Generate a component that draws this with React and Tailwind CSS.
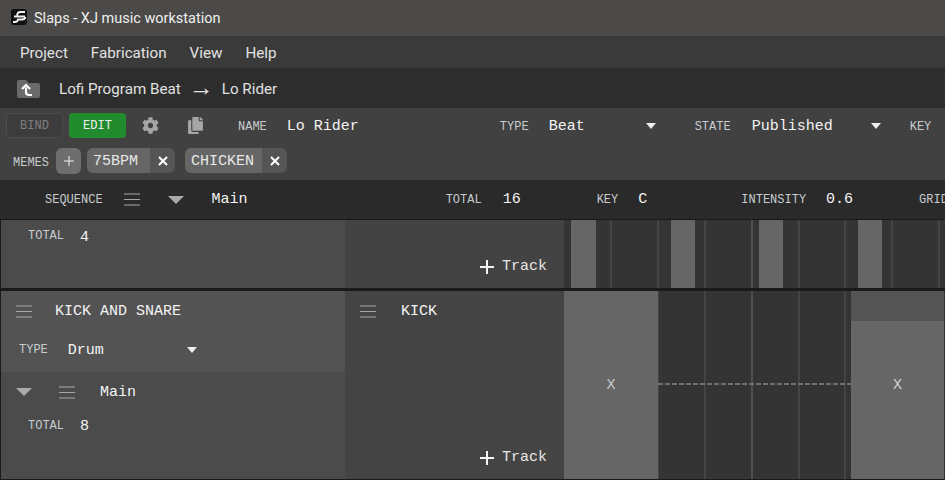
import { FaCog, FaCopy } from "react-icons/fa";

const mono = "font-['Liberation_Mono',monospace]";

const Burger = ({ className = "" }) => (
  <svg width="16" height="13" viewBox="0 0 16 13" className={`shrink-0 ${className}`}>
    <path d="M0 1h16M0 6.500h16M0 12h16" stroke="#a8a8a8" strokeWidth="1" />
  </svg>
);

const Caret = ({ big = false, className = "" }) =>
  big ? (
    <svg width="16" height="8" viewBox="0 0 16 8" className={`shrink-0 ${className}`}>
      <path d="M0 0h16L8 8z" fill="#aaaaaa" />
    </svg>
  ) : (
    <svg width="10" height="6" viewBox="0 0 10 6" className={`shrink-0 ${className}`}>
      <path d="M0 0h10L5 6z" fill="#eeeeee" />
    </svg>
  );

const Label = ({ children, className = "" }) => (
  <span className={`${mono} text-xs leading-none text-[#c8ccd0] whitespace-nowrap ${className}`}>
    {children}
  </span>
);

const Value = ({ children, className = "", color = "text-[#f4f4f4]" }) => (
  <span className={`${mono} text-[15px] leading-none whitespace-nowrap ${color} ${className}`}>
    {children}
  </span>
);

const Chip = ({ name, textWidth }) => (
  <div className="flex h-[25px] items-stretch">
    <div
      className={`flex items-center rounded-l-md bg-[#666666] pl-[6px] pt-[3px] ${mono} text-[15px] text-[#e8e8e8] ${textWidth}`}
    >
      {name}
    </div>
    <div className="flex w-[25px] items-center justify-center rounded-r-md bg-[#555555]">
      <svg width="10" height="10" viewBox="0 0 10 10">
        <path d="M1 1l8 8M9 1l-8 8" stroke="#ffffff" strokeWidth="2" />
      </svg>
    </div>
  </div>
);

const AddTrack = () => (
  <div className="absolute bottom-[14px] right-[17px] flex items-center gap-[8px]">
    <svg width="14" height="14" viewBox="0 0 14 14">
      <path d="M0 7h14M7 0v14" stroke="#f6f6f6" strokeWidth="2" />
    </svg>
    <Value color="text-[#e6e6e6]">Track</Value>
  </div>
);

// grid lines inside a timeline, x relative to the timeline's left edge
const gridLines = [46, 93, 140, 187, 234, 280, 327, 374];

const Timeline = ({ children }) => (
  <div className="relative flex-1 overflow-hidden bg-[#343434]">
    {gridLines.map((x) => (
      <div
        key={x}
        className={`absolute inset-y-0 w-[2px] ${x === 187 ? "bg-[#505050]" : "bg-[#444444]"}`}
        style={{ left: x }}
      />
    ))}
    {children}
  </div>
);

const Block = ({ left, width, children }) => (
  <div
    className="absolute inset-y-0 flex items-center justify-center bg-[#666666]"
    style={{ left, width }}
  >
    {children}
  </div>
);

export default function App() {
  return (
    <div className="flex h-[480px] w-[945px] flex-col overflow-hidden bg-[#1a1a1a] font-['Roboto',sans-serif]">
      {/* window title */}
      <div className="flex h-9 shrink-0 items-center bg-[#4b4a48] pl-[11px]">
        <svg width="16" height="16" viewBox="0 0 16 16" className="-mt-[2px] shrink-0">
          <rect width="16" height="16" rx="3" fill="#111111" />
          <path
            d="M14 3H9Q6.500 3 6 6.500M3 7.500h11M14.500 8Q14 10.500 11 10.500H7Q6.500 13 4 13H2"
            stroke="#f0f0f0"
            strokeWidth="1.800"
            fill="none"
          />
        </svg>
        <span className="ml-[7px] pt-[2px] text-[14.5px] text-[#efefef]">
          Slaps - XJ music workstation
        </span>
      </div>

      {/* menu bar */}
      <div className="flex h-8 shrink-0 items-center gap-[23px] bg-[#3a3a3a] pl-5 pt-[3px] text-[15.2px] text-[#e2e2e2]">
        <span>Project</span>
        <span>Fabrication</span>
        <span>View</span>
        <span>Help</span>
      </div>

      {/* breadcrumb */}
      <div className="flex h-10 shrink-0 items-center bg-[#2d2d2d] pl-[17px] pt-[2px] text-[15.2px] text-[#e0e0e0]">
        <svg width="23" height="20" viewBox="0 0 23 20" className="shrink-0">
          <path
            d="M0 3q0-2 2-2h7l3 3h9q2 0 2 2v11q0 2-2 2H2q-2 0-2-2z"
            fill="#6a6a6a"
          />
          <path
            d="M15 16h-3q-3 0-3-3V8.500M5 10l4-4 4 4"
            stroke="#ffffff"
            strokeWidth="2.200"
            fill="none"
          />
        </svg>
        <span className="ml-[19px]">Lofi Program Beat</span>
        <span className="-mt-1 ml-3 flex w-[17px] justify-center text-[25px] leading-none">→</span>
        <span className="ml-3">Lo Rider</span>
      </div>

      {/* toolbar */}
      <div className="flex h-[72px] shrink-0 flex-col bg-[#414141]">
        <div className="flex h-[35px] shrink-0 items-center pl-[6px] pt-[5px] pb-[5px]">
          <button className={`h-[25px] w-[57px] rounded border border-[#4c4c4c] bg-[#3c3c3c] ${mono} text-xs text-[#7f7f7f]`}>
            BIND
          </button>
          <button className={`ml-[6px] h-[25px] w-[57px] rounded bg-[#228b2e] ${mono} text-xs text-[#f0f0f0]`}>
            EDIT
          </button>
          <FaCog size={17} color="#a6a6a6" className="ml-4 shrink-0" />
          <FaCopy size={17} color="#a6a6a6" className="ml-7 shrink-0" />
          <Label className="ml-[34px] mt-[2px]">NAME</Label>
          <Value className="ml-[20px] mt-[2px]">Lo Rider</Value>
          <Label className="ml-[141px] mt-[2px]">TYPE</Label>
          <Value className="ml-[20px] mt-[2px]">Beat</Value>
          <Caret className="ml-[61px]" />
          <Label className="ml-[39px] mt-[2px]">STATE</Label>
          <Value className="ml-[21px] mt-[2px]">Published</Value>
          <Caret className="ml-[38px]" />
          <Label className="ml-[29px] mt-[2px]">KEY</Label>
        </div>
        <div className="mt-[5px] flex items-start pl-[13px]">
          <Label className="mt-[9px]">MEMES</Label>
          <div className="ml-[7px] flex h-[26px] w-[25px] items-center justify-center rounded-md bg-[#6e6e6e]">
            <svg width="10" height="10" viewBox="0 0 10 10">
              <path d="M0 5h10M5 0v10" stroke="#f0f0f0" strokeWidth="1" />
            </svg>
          </div>
          <div className="ml-[6px]">
            <Chip name="75BPM" textWidth="w-[63px]" />
          </div>
          <div className="ml-[10px]">
            <Chip name="CHICKEN" textWidth="w-[77px]" />
          </div>
        </div>
      </div>

      {/* sequence bar */}
      <div className="flex h-[39px] shrink-0 items-center bg-[#2a2a2a] pl-[45px]">
        <Label>SEQUENCE</Label>
        <Burger className="ml-[21px]" />
        <Caret big className="ml-7" />
        <Value className="ml-7">Main</Value>
        <Label className="ml-[198px]">TOTAL</Label>
        <Value className="ml-[21px]">16</Value>
        <Label className="ml-[76px]">KEY</Label>
        <Value className="ml-[20px]">C</Value>
        <Label className="ml-[94px]">INTENSITY</Label>
        <Value className="ml-[20px]">0.6</Value>
        <Label className="ml-[66px]">GRID</Label>
      </div>

      {/* first binding, clipped by the scroll area */}
      <div className="mt-px flex h-[68px] shrink-0 pl-px">
        <div className="flex w-[344px] shrink-0 items-start gap-[16px] bg-[#4b4b4b] pl-[27px] pt-[10px]">
          <Label>TOTAL</Label>
          <Value>4</Value>
        </div>
        <div className="relative w-[219px] shrink-0 bg-[#434343]">
          <AddTrack />
        </div>
        <Timeline>
          <Block left={7} width={25} />
          <Block left={107} width={24} />
          <Block left={195} width={24} />
          <Block left={294} width={24} />
        </Timeline>
      </div>

      {/* second binding */}
      <div className="mt-[3px] flex h-[188px] shrink-0 pl-px">
        <div className="flex w-[344px] shrink-0 flex-col bg-[#4b4b4b]">
          <div className="flex h-[81px] flex-col bg-[#535353] pl-[15px]">
            <div className="flex h-10 items-center gap-[23px]">
              <Burger />
              <Value>KICK AND SNARE</Value>
            </div>
            <div className="ml-[3px] flex h-9 items-center pt-[2px]">
              <Label>TYPE</Label>
              <Value className="ml-[20px]">Drum</Value>
              <Caret className="ml-[83px]" />
            </div>
          </div>
          <div className="flex h-10 items-center pl-[15px]">
            <Caret big />
            <Burger className="ml-[27px]" />
            <Value className="ml-[25px]">Main</Value>
          </div>
          <div className="flex h-7 items-center gap-[16px] pl-[27px]">
            <Label>TOTAL</Label>
            <Value>8</Value>
          </div>
        </div>
        <div className="relative flex w-[219px] shrink-0 flex-col bg-[#444444] pl-[15px]">
          <div className="flex h-10 items-center gap-[25px]">
            <Burger />
            <Value>KICK</Value>
          </div>
          <AddTrack />
        </div>
        <Timeline>
          <Block left={0} width={94}>
            <Value color="text-[#c8c8c8]">X</Value>
          </Block>
          <div className="absolute left-[94px] top-[92px] h-[2px] w-[193px] bg-[repeating-linear-gradient(90deg,#707070_0,#707070_5px,transparent_5px,transparent_7px)]" />
          <div className="absolute left-[287px] top-0 flex h-full w-[93px] flex-col">
            <div className="h-[30px] bg-[#555555]" />
            <div className="flex flex-1 items-center justify-center bg-[#666666]">
              <Value className="-mt-[30px]" color="text-[#d0d0d0]">X</Value>
            </div>
          </div>
        </Timeline>
      </div>
    </div>
  );
}
